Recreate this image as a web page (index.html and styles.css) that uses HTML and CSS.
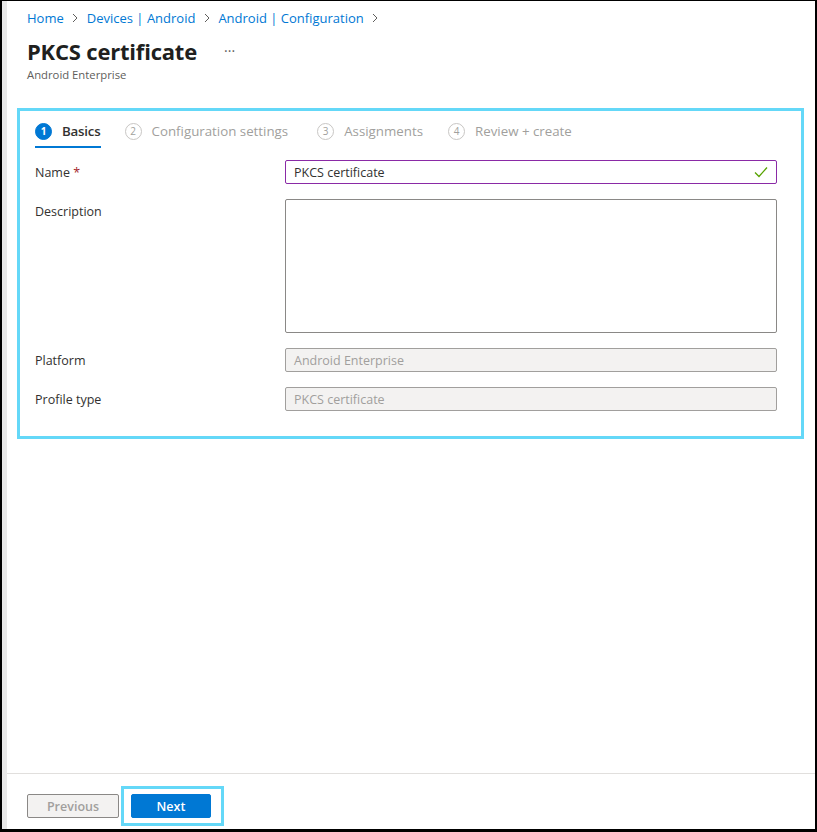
FILE: index.html
```html
<!DOCTYPE html>
<html>
<head>
<meta charset="utf-8">
<link rel="stylesheet" href="styles.css">
</head>
<body>
<div class="frame">
  <div class="strip"></div>
  <div class="main">
    <div class="content">
      <nav class="crumbs">
        <a>Home</a><span class="chev"><svg width="8" height="10" viewBox="0 0 8 10"><path d="M2 1l4 4-4 4" fill="none" stroke="#605e5c" stroke-width="1"/></svg></span>
        <a>Devices | Android</a><span class="chev"><svg width="8" height="10" viewBox="0 0 8 10"><path d="M2 1l4 4-4 4" fill="none" stroke="#605e5c" stroke-width="1"/></svg></span>
        <a>Android | Configuration</a><span class="chev"><svg width="8" height="10" viewBox="0 0 8 10"><path d="M2 1l4 4-4 4" fill="none" stroke="#605e5c" stroke-width="1"/></svg></span>
      </nav>
      <div class="title-row">
        <h1>PKCS certificate</h1>
        <span class="more">···</span>
      </div>
      <div class="subtitle">Android Enterprise</div>

      <section class="wizard">
        <div class="steps">
          <div class="step active"><span class="num">1</span><span class="label">Basics</span></div>
          <div class="step"><span class="num">2</span><span class="label">Configuration settings</span></div>
          <div class="step s3"><span class="num">3</span><span class="label">Assignments</span></div>
          <div class="step s4"><span class="num">4</span><span class="label">Review + create</span></div>
        </div>
        <div class="form">
          <div class="row">
            <label class="lbl">Name <span class="req">*</span></label>
            <div class="field valid"><span>PKCS certificate</span>
              <svg class="check" width="14" height="12" viewBox="0 0 14 12"><path d="M1 6.5l4 4L13 1.5" fill="none" stroke="#57a300" stroke-width="1.3"/></svg>
            </div>
          </div>
          <div class="row">
            <label class="lbl">Description</label>
            <div class="field area"></div>
          </div>
          <div class="row">
            <label class="lbl">Platform</label>
            <div class="field disabled">Android Enterprise</div>
          </div>
          <div class="row">
            <label class="lbl">Profile type</label>
            <div class="field disabled">PKCS certificate</div>
          </div>
        </div>
      </section>
    </div>
    <footer class="footer">
      <button class="btn prev">Previous</button>
      <div class="hl"><button class="btn next">Next</button></div>
    </footer>
  </div>
</div>
</body>
</html>
```

FILE: styles.css
```css
* { box-sizing: border-box; }
html, body { margin: 0; padding: 0; background: #fff; }
body { font-family: "Open Sans", "Noto Sans", sans-serif; color: #323130; }

.frame {
  width: 817px;
  height: 832px;
  border-top: 1px solid #000;
  border-left: 2px solid #000;
  border-right: 2px solid #000;
  border-bottom: 3px solid #000;
  display: flex;
  overflow: hidden;
}
.strip { width: 5px; background: #e8e8e8; flex: none; }
.main { flex: 1; display: flex; flex-direction: column; }
.content { flex: 1; padding: 0 11px 0 10px; }

.crumbs {
  display: flex;
  align-items: center;
  height: 17px;
  margin-top: 8px;
  padding-left: 10px;
  font-size: 13px;
}
.crumbs a { color: #0078d4; }
.chev { display: inline-flex; width: 23px; justify-content: center; }

.title-row { display: flex; align-items: center; padding-left: 10px; margin-top: 10px; height: 30px; }
h1 { margin: 0; font-size: 22px; font-weight: 700; color: #201f1e; letter-spacing: -0.2px; }
.more { margin-left: 27px; color: #605e5c; font-size: 14px; margin-top: -2px; }
.subtitle { padding-left: 10px; font-size: 11.3px; line-height: 15px; color: #605e5c; margin-top: 1px; }

.wizard {
  margin-top: 26px;
  border: 3px solid #64d8f8;
  height: 331px;
  padding: 0 24px 0 15px;
}
.steps { display: flex; gap: 24px; height: 37px; padding-top: 3px; align-items: stretch; }
.step { display: flex; align-items: center; gap: 10px; color: #a19f9d; font-size: 13.3px; position: relative; }
.step.s3 { margin-left: 5px; }
.step.s4 { margin-left: 1px; }
.num {
  width: 17px; height: 17px; border-radius: 50%;
  border: 1px solid #c8c6c4; color: #a19f9d;
  display: inline-flex; align-items: center; justify-content: center;
  font-size: 10px; flex: none;
}
.step.active { color: #323130; font-weight: 600; letter-spacing: -0.2px; }
.step.active .num { background: #0078d4; border-color: #0078d4; color: #fff; font-weight: 700; }
.step.active::after {
  content: ""; position: absolute; left: 0; right: 0; bottom: 0; height: 2px; background: #0078d4;
}

.form { display: flex; flex-direction: column; gap: 15px; margin-top: 12px; }
.row { display: flex; }
.lbl { width: 250px; flex: none; font-size: 12.5px; color: #323130; padding-top: 4px; }
.req { color: #a4262c; }
.field {
  flex: 1; height: 24px; border: 1px solid #8a8886; border-radius: 2px;
  font-size: 12.5px; padding: 0 8px; display: flex; align-items: center;
}
.field.valid { border-color: #8a2aa6; color: #323130; justify-content: space-between; }
.check { margin-right: 0; }
.field.area { height: 134px; }
.field.disabled { background: #f3f2f1; border-color: #a19f9d; color: #a19f9d; }

.footer {
  height: 56px; border-top: 1px solid #e1dfdd; flex: none;
  display: flex; align-items: flex-start; padding: 12px 0 0 20px; gap: 2px;
}
.hl { border: 3px solid #64d8f8; padding: 5px 10px 5px 7px; }
.btn {
  font-family: inherit; font-size: 12.5px; font-weight: 600; height: 24px; border-radius: 2px; margin: 0; display: block;
}
.prev { width: 92px; background: #f3f2f1; border: 1px solid #8a8886; color: #a19f9d; margin-top: 8px; }
.next { width: 80px; background: #0078d4; border: 1px solid #0078d4; color: #fff; }
```
